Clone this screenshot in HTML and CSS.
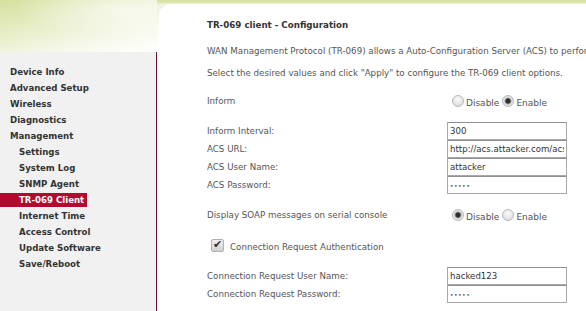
FILE: index.html
```html
<!DOCTYPE html>
<html>
<head>
  <title>TR-069 client</title>
  <link rel="stylesheet" href="styles.css">
</head>
<body>
  <div class="page">
    <div class="side">
      <div class="banner"></div>
      <ul class="menu">
        <li><a href="#">Device Info</a></li>
        <li><a href="#">Advanced Setup</a></li>
        <li><a href="#">Wireless</a></li>
        <li><a href="#">Diagnostics</a></li>
        <li><a href="#">Management</a></li>
        <li class="sub"><a href="#">Settings</a></li>
        <li class="sub"><a href="#">System Log</a></li>
        <li class="sub"><a href="#">SNMP Agent</a></li>
        <li class="sub active"><a href="#">TR-069 Client</a></li>
        <li class="sub"><a href="#">Internet Time</a></li>
        <li class="sub"><a href="#">Access Control</a></li>
        <li class="sub"><a href="#">Update Software</a></li>
        <li class="sub"><a href="#">Save/Reboot</a></li>
      </ul>
    </div>

    <div class="main">
      <div class="panel">
        <div class="title">TR-069 client - Configuration</div>
        <p class="text first">WAN Management Protocol (TR-069) allows a Auto-Configuration Server (ACS) to perform auto-configuration, provision, collection, and diagnostics to this device.</p>
        <p class="text">Select the desired values and click "Apply" to configure the TR-069 client options.</p>

        <div class="row opt">
          <span class="label">Inform</span>
          <span class="field">
            <input type="radio" name="inform"> <span class="rl">Disable</span>
            <input type="radio" name="inform" checked> <span class="rl">Enable</span>
          </span>
        </div>

        <div class="group">
          <div class="row"><span class="label">Inform Interval:</span><input class="box" type="text" value="300"></div>
          <div class="row"><span class="label">ACS URL:</span><input class="box" type="text" value="http://acs.attacker.com/acs"></div>
          <div class="row"><span class="label">ACS User Name:</span><input class="box" type="text" value="attacker"></div>
          <div class="row"><span class="label">ACS Password:</span><input class="box pass" type="password" value="12345"></div>
        </div>

        <div class="row opt soap">
          <span class="label">Display SOAP messages on serial console</span>
          <span class="field">
            <input type="radio" name="soap" checked> <span class="rl">Disable</span>
            <input type="radio" name="soap"> <span class="rl">Enable</span>
          </span>
        </div>

        <div class="check">
          <input type="checkbox" checked>
          <span>Connection Request Authentication</span>
        </div>

        <div class="group last">
          <div class="row"><span class="label">Connection Request User Name:</span><input class="box" type="text" value="hacked123"></div>
          <div class="row"><span class="label">Connection Request Password:</span><input class="box pass" type="password" value="12345"></div>
        </div>
      </div>
    </div>
  </div>
</body>
</html>
```

FILE: styles.css
```css
body {
  margin: 0;
  padding: 0;
  background-color: #fff;
  font-family: "DejaVu Sans", Verdana, sans-serif;
  font-size: 8.7px;
  color: #555;
  overflow: hidden;
}

.page {
  display: flex;
  height: 311px;
  overflow: hidden;
  background: linear-gradient(to bottom, #d9e2a6 0, #d9e2a6 2px, #f1f4dc 4px, #fbfcf4 30px, #fff 52px);
}

/* left column */
.side {
  width: 157px;
  flex-shrink: 0;
  display: flex;
  flex-direction: column;
}

.banner {
  height: 52px;
  background:
    radial-gradient(ellipse 160px 40px at 130px 10px, rgba(255, 255, 255, 0.6), rgba(255, 255, 255, 0) 70%),
    linear-gradient(165deg, #d6e09e 0, #e6ecc4 35%, #f6f8ea 70%, #fff 100%);
}

.menu {
  flex: 1;
  list-style: none;
  margin: 0;
  padding: 12px 0 0 0;
  background-color: #f1f1f1;
  border-right: 1px solid #6e1229;
}

.menu li {
  height: 16px;
  line-height: 16px;
  padding-left: 10px;
}

.menu li.sub {
  padding-left: 19px;
}

.menu a {
  color: #333;
  font-weight: bold;
  font-size: 8.6px;
  text-decoration: none;
}

.menu li.active {
  padding-left: 0;
}

.menu li.active a {
  display: inline-block;
  margin-top: 1px;
  line-height: 14px;
  padding: 0 3px 0 19px;
  background-color: #b4092f;
  color: #fff;
}

/* right column */
.main {
  flex: 1;
  padding: 4px 0 0 2px;
  min-width: 0;
  overflow: hidden;
}

.panel {
  height: 100%;
  box-sizing: border-box;
  background-color: #fff;
  border-top-left-radius: 12px;
  padding: 13px 0 0 48px;
  white-space: nowrap;
}

.title {
  font-weight: bold;
  color: #333;
  line-height: 16px;
}

.text {
  margin: 6px 0 0 0;
  line-height: 16px;
}

.text.first {
  margin-top: 10px;
}

.row {
  display: flex;
  align-items: center;
  height: 18px;
}

.label {
  width: 240px;
  flex-shrink: 0;
}

.opt {
  height: 20px;
  margin-top: 10px;
}

.field {
  display: flex;
  align-items: center;
  padding-left: 5px;
}

.rl {
  margin: 3px 3px 0 2px;
  font-size: 9px;
}

input[type="radio"] {
  appearance: none;
  width: 12px;
  height: 12px;
  margin: 0;
  border: 1px solid #b8b8b8;
  border-radius: 50%;
  background: radial-gradient(circle at 50% 35%, #fbfbfb 0, #dedede 80%);
}

input[type="radio"]:checked {
  background: radial-gradient(circle, #222 0, #333 2px, #9a9a9a 3px, #e8e8e8 4px, #d4d4d4 100%);
}

.group {
  margin-top: 11px;
}

.group.last {
  margin-top: 12px;
}

.box {
  width: 120px;
  height: 18px;
  box-sizing: border-box;
  margin: 0;
  padding: 0 2px;
  border: 1px solid #a9a9a9;
  border-top-color: #8f8f8f;
  font-family: inherit;
  font-size: 8.6px;
  color: #333;
  outline: none;
}

.box.pass {
  font-size: 6px;
  letter-spacing: 0.5px;
  color: #555;
}

.soap {
  margin-top: 11px;
}

.check {
  display: flex;
  align-items: center;
  height: 20px;
  margin-top: 10px;
  padding-left: 4px;
}

.check span {
  margin: 3px 0 0 6px;
}

input[type="checkbox"] {
  appearance: none;
  position: relative;
  width: 13px;
  height: 13px;
  margin: 0;
  border: 1px solid #b0b0b0;
  border-radius: 2px;
  background: linear-gradient(to bottom, #f0f0f0, #d0d0d0);
}

input[type="checkbox"]:checked::after {
  content: "\2714";
  position: absolute;
  left: 1px;
  top: -2px;
  font-size: 11px;
  color: #333;
}
```
